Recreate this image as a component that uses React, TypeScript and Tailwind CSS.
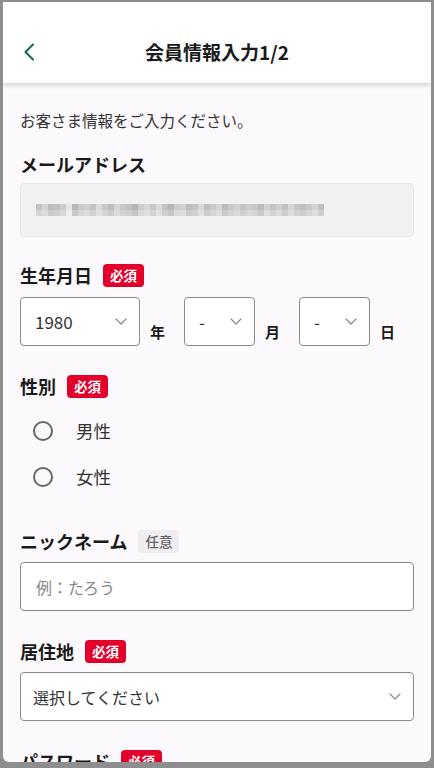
import { ReactNode } from "react"

const font = { fontFamily: '"Noto Sans CJK JP", "Noto Sans", sans-serif' }

// pixelated (mosaic) email address
const mosaic = [
  [0xc6, 0xd4, 0xbd, 0xc2, 0xcc, 0xe6, 0xb8, 0xcb, 0xd0, 0xc4, 0xdc, 0xc9, 0xbf, 0xd6, 0xc8, 0xc1, 0xb5, 0xcd, 0xd8, 0xc7, 0xdb, 0xc3, 0xb7, 0xcf, 0xd2, 0xbe, 0xc5, 0xd9, 0xc0, 0xca, 0xd5, 0xbc, 0xc9, 0xd1, 0xc4, 0xce, 0xc8, 0xbb, 0xd3, 0xc6, 0xcf, 0xc2, 0xd7, 0xc5, 0xbf, 0xca, 0xd4, 0xc3],
  [0xd4, 0xdc, 0xcc, 0xd0, 0xd8, 0xee, 0xca, 0xd6, 0xdb, 0xd2, 0xe2, 0xd5, 0xcd, 0xde, 0xd3, 0xcf, 0xc6, 0xd9, 0xe0, 0xd4, 0xe3, 0xd1, 0xc7, 0xdb, 0xdd, 0xcc, 0xd2, 0xe1, 0xcf, 0xd6, 0xdf, 0xcb, 0xd5, 0xdc, 0xd1, 0xda, 0xd4, 0xcb, 0xde, 0xd3, 0xdb, 0xcf, 0xe0, 0xd2, 0xce, 0xd6, 0xde, 0xd0],
]

function Badge({ optional }: { optional?: boolean }) {
  return optional ? (
    <span className="ml-[11px] inline-flex h-[23px] items-center rounded-[4px] bg-[#efedf0] px-[7px] text-[13.5px] font-medium text-[#666]">
      任意
    </span>
  ) : (
    <span className="ml-[11px] inline-flex h-[23px] items-center rounded-[4px] bg-[#e2002b] px-[7px] text-[13.5px] font-bold text-white">
      必須
    </span>
  )
}

function Label({ children, badge }: { children: ReactNode; badge?: "req" | "opt" }) {
  return (
    <div className="flex h-[23px] items-center">
      <span className="text-[18px] font-bold leading-[23px] text-[#1a1a1a]">{children}</span>
      {badge === "req" && <Badge />}
      {badge === "opt" && <Badge optional />}
    </div>
  )
}

function Chevron() {
  return (
    <svg width="12" height="7" viewBox="0 0 12 7" fill="none">
      <path d="M1 1l5 5 5-5" stroke="#8a8a8a" strokeWidth="1.2" strokeLinecap="round" strokeLinejoin="round" />
    </svg>
  )
}

function DateSelect({ value, w }: { value: string; w: string }) {
  return (
    <div className={`flex h-[49px] ${w} items-center justify-between rounded-[4px] border border-[#8a8a8a] bg-white pl-[14px] pr-[12px]`}>
      <span className="text-[17px] text-[#333]">{value}</span>
      <Chevron />
    </div>
  )
}

function Radio({ label }: { label: string }) {
  return (
    <div className="flex h-[46px] items-center pl-[13px]">
      <span className="h-[20px] w-[20px] rounded-full border-2 border-[#666]" />
      <span className="ml-[23px] text-[17.5px] text-[#333]">{label}</span>
    </div>
  )
}

export default function App() {
  return (
    <div className="h-[768px] w-[434px] overflow-hidden bg-[#8e8e8e] pb-[6px] pl-[3px] pr-[3px] pt-[2px]" style={font}>
      <div className="relative h-full overflow-hidden rounded-b-[6px] bg-[#fbf9fc]">
        {/* Header */}
        <header className="relative z-10 h-[81px] bg-white pt-[20px] shadow-[0_2px_5px_rgba(0,0,0,0.18)]">
          <div className="relative flex h-[61px] items-center justify-center">
            <svg className="absolute left-[20px] top-[21px]" width="12" height="18" viewBox="0 0 12 18" fill="none">
              <path d="M10 1.5L2.5 9l7.5 7.5" stroke="#0e6b42" strokeWidth="2" strokeLinecap="round" strokeLinejoin="round" />
            </svg>
            <h1 className="text-[19px] font-bold text-[#1a1a1a]">会員情報入力1/2</h1>
          </div>
        </header>

        <main className="px-[17px]">
          <p className="mt-[26px] text-[15.5px] leading-[22px] text-[#333]">お客さま情報をご入力ください。</p>

          {/* Email */}
          <div className="mt-[22px]">
            <Label>メールアドレス</Label>
            <div className="mt-[7px] flex h-[54px] items-center rounded-[4px] border border-[#e8e6e9] bg-[#f2f0f3] px-[15px]">
              <div className="flex flex-col">
                {mosaic.map((row, i) => (
                  <div key={i} className="flex">
                    {row.map((g, j) => (
                      <span
                        key={j}
                        className="h-[6px] w-[6px]"
                        style={{ backgroundColor: `rgb(${g},${g - 2},${g + 1})` }}
                      />
                    ))}
                  </div>
                ))}
              </div>
            </div>
          </div>

          {/* Birthday */}
          <div className="mt-[27px]">
            <Label badge="req">生年月日</Label>
            <div className="mt-[10px] flex items-end">
              <DateSelect value="1980" w="w-[120px]" />
              <span className="mb-[3px] ml-[10px] text-[15px] font-bold text-[#1a1a1a]">年</span>
              <div className="ml-[19px]">
                <DateSelect value="-" w="w-[71px]" />
              </div>
              <span className="mb-[3px] ml-[10px] text-[15px] font-bold text-[#1a1a1a]">月</span>
              <div className="ml-[19px]">
                <DateSelect value="-" w="w-[71px]" />
              </div>
              <span className="mb-[3px] ml-[10px] text-[15px] font-bold text-[#1a1a1a]">日</span>
            </div>
          </div>

          {/* Gender */}
          <div className="mt-[29px]">
            <Label badge="req">性別</Label>
            <div className="mt-[10px]">
              <Radio label="男性" />
              <Radio label="女性" />
            </div>
          </div>

          {/* Nickname */}
          <div className="mt-[30px]">
            <Label badge="opt">ニックネーム</Label>
            <div className="mt-[9px] flex h-[49px] items-center rounded-[4px] border border-[#8a8a8a] bg-white px-[15px]">
              <span className="text-[16px] text-[#888]">例：たろう</span>
            </div>
          </div>

          {/* Residence */}
          <div className="mt-[29px]">
            <Label badge="req">居住地</Label>
            <div className="mt-[9px] flex h-[49px] items-center justify-between rounded-[4px] border border-[#8a8a8a] bg-white pl-[12px] pr-[12px]">
              <span className="text-[16px] text-[#333]">選択してください</span>
              <Chevron />
            </div>
          </div>

          {/* Password */}
          <div className="mt-[29px]">
            <Label badge="req">パスワード</Label>
          </div>
        </main>
      </div>
    </div>
  )
}
